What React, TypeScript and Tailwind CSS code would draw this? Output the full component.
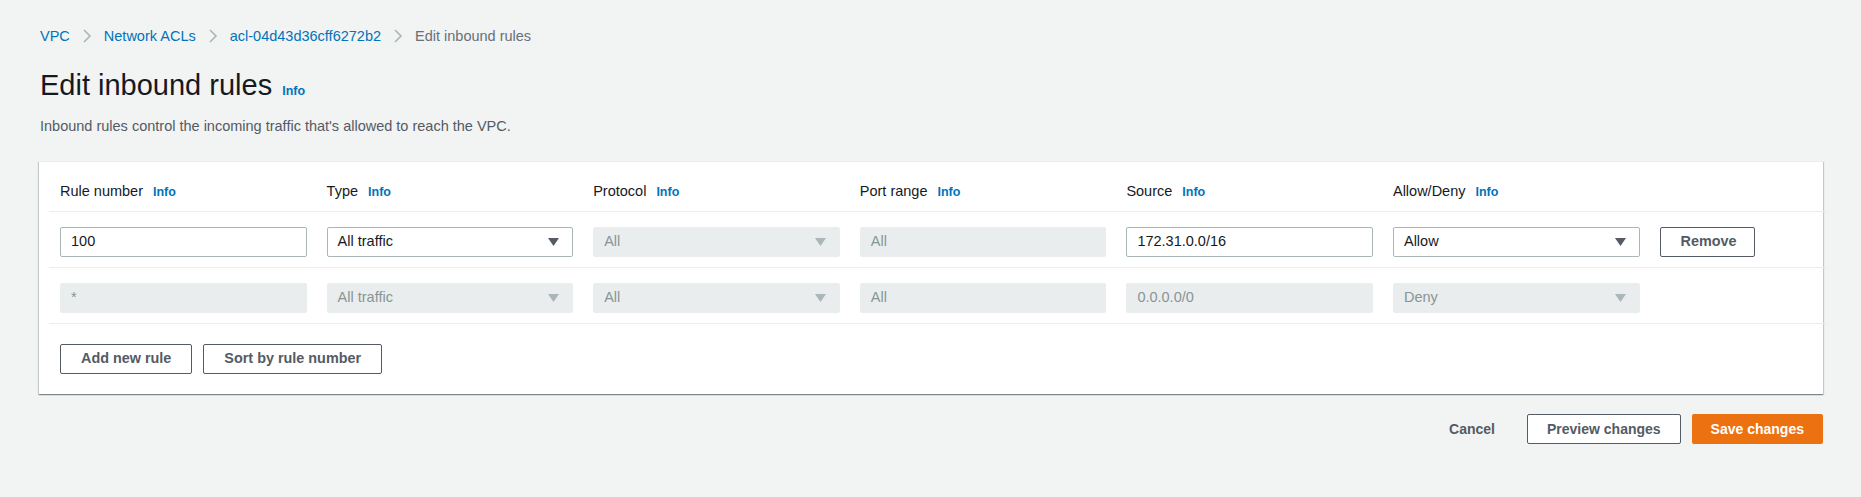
import React from "react";

const font = { fontFamily: '"Liberation Sans", Arial, sans-serif' };

function Chevron() {
  return (
    <svg width="10" height="16" viewBox="0 0 10 16" className="shrink-0">
      <polyline
        points="2,2 8,8 2,14"
        fill="none"
        stroke="#aab7b8"
        strokeWidth="1.6"
      />
    </svg>
  );
}

function Caret({ disabled }: { disabled?: boolean }) {
  return (
    <svg width="11" height="8" viewBox="0 0 11 8">
      <polygon points="0,0 11,0 5.5,8" fill={disabled ? "#aab7b8" : "#545b64"} />
    </svg>
  );
}

function Info() {
  return (
    <span className="text-[12.5px] font-bold text-[#0073bb] leading-none">Info</span>
  );
}

function TextInput({ value, disabled }: { value: string; disabled?: boolean }) {
  return (
    <div
      className={
        disabled
          ? "h-[30px] rounded-[2px] bg-[#eaeded] border border-[#eaeded] px-[10px] flex items-center text-[14.5px] text-[#879596]"
          : "h-[30px] rounded-[2px] bg-white border border-[#aab7b8] px-[10px] flex items-center text-[14.5px] text-[#16191f]"
      }
    >
      {value}
    </div>
  );
}

function Select({ value, disabled }: { value: string; disabled?: boolean }) {
  return (
    <div
      className={
        disabled
          ? "h-[30px] rounded-[2px] bg-[#eaeded] border border-[#eaeded] pl-[10px] pr-[13px] flex items-center justify-between text-[14.5px] text-[#879596]"
          : "h-[30px] rounded-[2px] bg-white border border-[#aab7b8] pl-[10px] pr-[13px] flex items-center justify-between text-[14.5px] text-[#16191f]"
      }
    >
      <span>{value}</span>
      <Caret disabled={disabled} />
    </div>
  );
}

function Button({ children }: { children: React.ReactNode }) {
  return (
    <button className="h-[30px] px-[20px] rounded-[2px] border border-[#545b64] bg-white text-[14.4px] font-bold text-[#545b64] whitespace-nowrap">
      {children}
    </button>
  );
}

const grid =
  "grid grid-cols-[repeat(6,246.6px)_95px] gap-x-[20px] pl-[21px] pr-[20px]";

const headers = ["Rule number", "Type", "Protocol", "Port range", "Source", "Allow/Deny"];

export default function App() {
  return (
    <div className="min-h-screen bg-[#f2f3f3] text-[#16191f]" style={font}>
      <div className="pt-[26px] px-[40px] flex items-center gap-[12px] h-[46px] text-[14.5px] leading-[20px]">
        <span className="text-[#0073bb]">VPC</span>
        <Chevron />
        <span className="text-[#0073bb]">Network ACLs</span>
        <Chevron />
        <span className="text-[#0073bb]">acl-04d43d36cff6272b2</span>
        <Chevron />
        <span className="text-[#687078]">Edit inbound rules</span>
      </div>

      <div className="mt-[21px] px-[40px] flex items-baseline gap-[10px]">
        <h1 className="text-[29px] leading-[36px] font-normal">Edit inbound rules</h1>
        <Info />
      </div>

      <p className="mt-[13px] px-[40px] text-[14.5px] leading-[20px] text-[#545b64]">
        Inbound rules control the incoming traffic that's allowed to reach the VPC.
      </p>

      <div className="mt-[25px] ml-[39px] mr-[38px] bg-white border-t border-[#eaeded] shadow-[0_1px_1px_0_rgba(0,28,36,0.3),1px_1px_1px_0_rgba(0,28,36,0.15),-1px_1px_1px_0_rgba(0,28,36,0.15)]">
        <div className={`${grid} pt-[19px] pb-[10px]`}>
          {headers.map((h) => (
            <div key={h} className="flex items-baseline gap-[10px] text-[14.5px] leading-[20px]">
              <span>{h}</span>
              <Info />
            </div>
          ))}
          <div />
        </div>
        <div className="ml-[10px] -mr-[5px] h-px bg-[#eaeded]" />

        <div className={`${grid} pt-[15px] pb-[10px]`}>
          <TextInput value="100" />
          <Select value="All traffic" />
          <Select value="All" disabled />
          <TextInput value="All" disabled />
          <TextInput value="172.31.0.0/16" />
          <Select value="Allow" />
          <Button>Remove</Button>
        </div>
        <div className="ml-[10px] -mr-[5px] h-px bg-[#eaeded]" />

        <div className={`${grid} pt-[15px] pb-[10px]`}>
          <TextInput value="*" disabled />
          <Select value="All traffic" disabled />
          <Select value="All" disabled />
          <TextInput value="All" disabled />
          <TextInput value="0.0.0.0/0" disabled />
          <Select value="Deny" disabled />
          <div />
        </div>
        <div className="ml-[10px] -mr-[5px] h-px bg-[#eaeded]" />

        <div className="pl-[21px] pr-[20px] pt-[20px] pb-[20px] flex gap-[11px]">
          <Button>Add new rule</Button>
          <Button>Sort by rule number</Button>
        </div>
      </div>

      <div className="mt-[20px] mr-[38px] flex justify-end items-center gap-[11px]">
        <button className="h-[30px] px-[20px] mr-[1px] text-[14px] font-bold text-[#545b64]">Cancel</button>
        <button className="h-[30px] px-[19px] rounded-[2px] border border-[#545b64] bg-white text-[14px] font-bold text-[#545b64] whitespace-nowrap">
          Preview changes
        </button>
        <button className="h-[30px] px-[19px] rounded-[2px] bg-[#ec7211] text-white text-[14px] font-bold">
          Save changes
        </button>
      </div>
    </div>
  );
}
